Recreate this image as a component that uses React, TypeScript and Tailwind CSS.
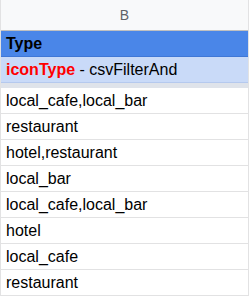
const rows = [
  "local_cafe,local_bar",
  "restaurant",
  "hotel,restaurant",
  "local_bar",
  "local_cafe,local_bar",
  "hotel",
  "local_cafe",
  "restaurant",
];

const App = () => {
  return (
    <div className="w-[250px] h-[296px] bg-white overflow-hidden font-['Liberation_Sans',Arial,sans-serif]">
      <div className="w-[249px] border-l border-r border-[#e2e2e3]">
        {/* column header */}
        <div className="h-[31px] bg-[#f8f9fa] border-b border-[#c0c0c0] flex items-center justify-center text-[14px] text-[#5f6368]">
          B
        </div>
        <div className="h-[26px] bg-[#4a86e8] border-b border-[#3f77d6] flex items-center pl-[5px] text-[16px] font-bold text-black">
          Type
        </div>
        <div className="h-[26px] bg-[#c9daf8] border-b border-[#b5c9ee] flex items-center pl-[5px] text-[16px] text-black">
          <span className="font-bold text-[#ff0000]">iconType</span>
          <span className="whitespace-pre"> - csvFilterAnd</span>
        </div>
        <div className="h-[5px] bg-[#dfe3ea]" />
        {rows.map((r, i) => (
          <div
            key={i}
            className="h-[26px] border-b border-[#e2e2e3] flex items-center pl-[5px] text-[16px] text-black"
          >
            {r}
          </div>
        ))}
      </div>
    </div>
  );
};

export default App;
